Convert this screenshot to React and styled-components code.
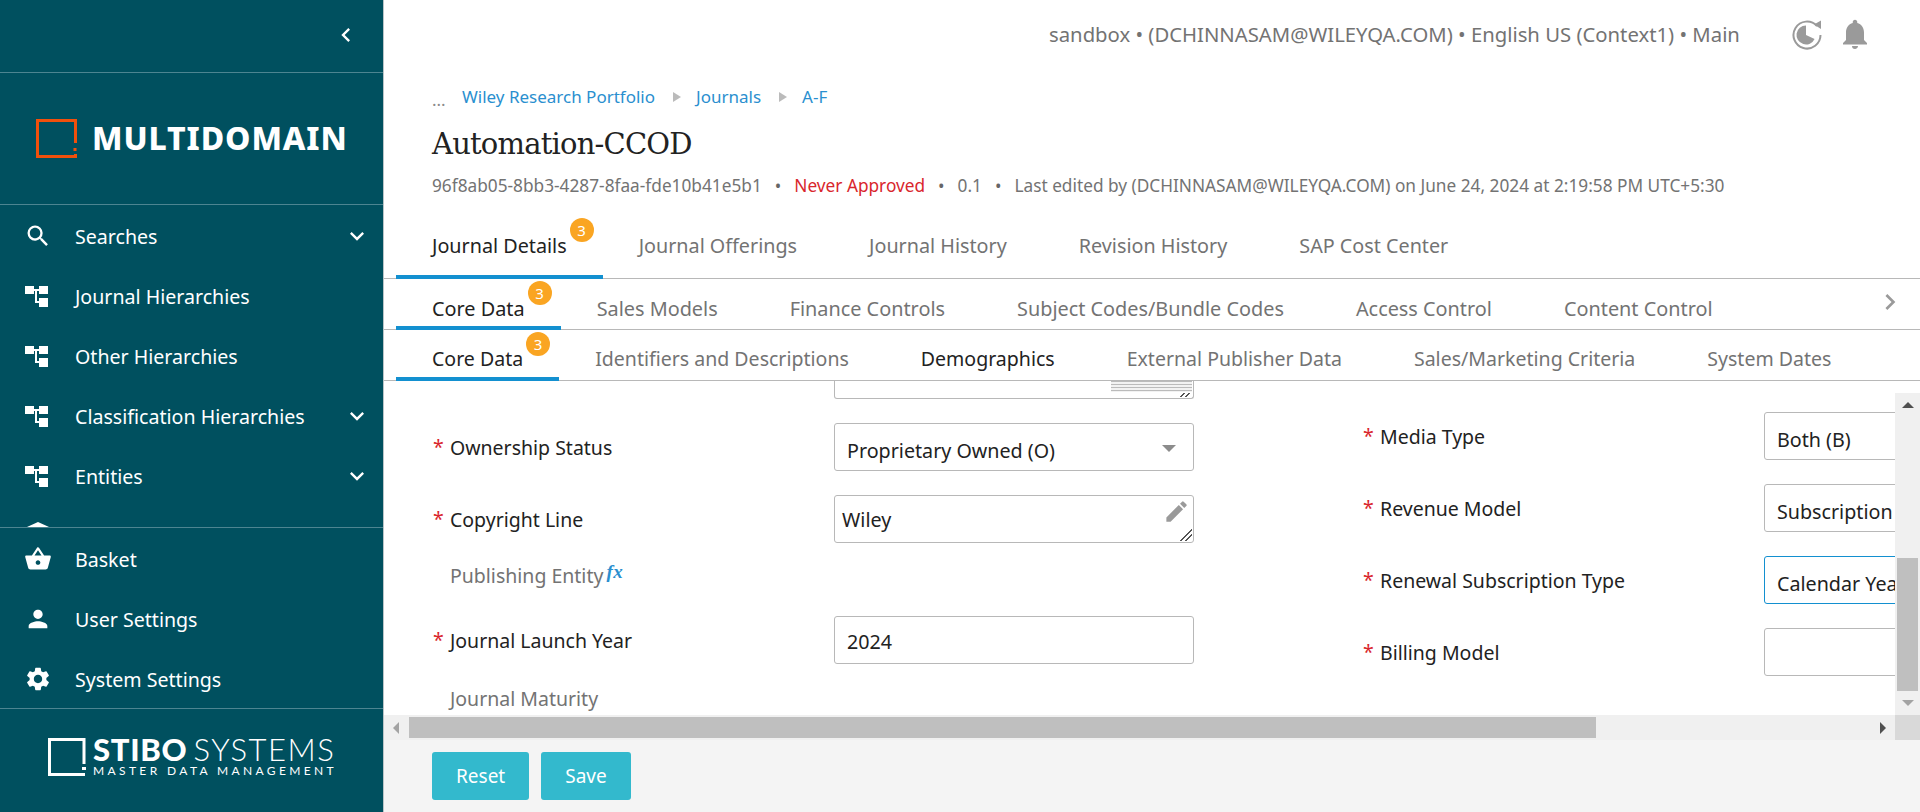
import React from 'react';
import styled, { createGlobalStyle } from 'styled-components';
import { MdSearch, MdShoppingBasket, MdPerson, MdSettings, MdEdit, MdNotifications, MdChevronLeft, MdChevronRight, MdExpandMore } from 'react-icons/md';

const GlobalStyle = createGlobalStyle`
  html, body { margin: 0; padding: 0; height: 100%; overflow: hidden; }
  body { font-family: "Noto Sans", "Open Sans", sans-serif; background: #fff; color: #222; }
  * { box-sizing: border-box; }
`;

const HierarchyIcon = () => (
  <svg width="24" height="24" viewBox="0 0 24 24" fill="#fff">
    <rect x="1" y="2" width="9" height="8" />
    <rect x="15" y="2" width="9" height="8" />
    <rect x="15" y="14" width="9" height="9" />
    <path d="M10 5h5v2h-2v10h2v2h-4V7h-1z" />
  </svg>
);

const HistoryIcon = () => (
  <svg width="31" height="32" viewBox="0 0 31 32">
    <path d="M25 8A13.5 13.5 0 1 0 28.5 17" fill="none" stroke="#9a9a9a" strokeWidth="2" />
    <path d="M14 7.5a9.5 9.5 0 1 0 8.6 13.5L14 17z" fill="#9a9a9a" />
    <path d="M22 6.5l7-4v8.5z" fill="#9a9a9a" />
  </svg>
);

const OrangeMark = () => (
  <svg width="41" height="39" viewBox="0 0 41 39" fill="none">
    <path d="M39.5 24V1.5H1.5v36H39.5V35" stroke="#f1500c" strokeWidth="3" />
    <rect x="37.5" y="29" width="3" height="3" fill="#f1500c" />
  </svg>
);

const WhiteMark = () => (
  <svg width="38" height="38" viewBox="0 0 38 38" fill="none">
    <path d="M36 26V1.5H1.5v35H37" stroke="#fff" strokeWidth="3" />
    <rect x="34" y="29" width="4" height="3" fill="#fff" />
  </svg>
);

const topMenu = [
  { label: 'Searches', icon: <MdSearch size={28} />, more: true },
  { label: 'Journal Hierarchies', icon: <HierarchyIcon /> },
  { label: 'Other Hierarchies', icon: <HierarchyIcon /> },
  { label: 'Classification Hierarchies', icon: <HierarchyIcon />, more: true },
  { label: 'Entities', icon: <HierarchyIcon />, more: true },
];

const bottomMenu = [
  { label: 'Basket', icon: <MdShoppingBasket size={28} /> },
  { label: 'User Settings', icon: <MdPerson size={28} /> },
  { label: 'System Settings', icon: <MdSettings size={28} /> },
];

const tabRows = [
  { height: 80, pad: 33, size: 19.75, tabs: ['Journal Details', 'Journal Offerings', 'Journal History', 'Revision History', 'SAP Cost Center'], badgeY: 19, badgeRight: 9 },
  { height: 51, pad: 16, size: 19.85, tabs: ['Core Data', 'Sales Models', 'Finance Controls', 'Subject Codes/Bundle Codes', 'Access Control', 'Content Control'], more: true, badgeY: 2, badgeRight: 9 },
  { height: 51, pad: 15, size: 19.55, tabs: ['Core Data', 'Identifiers and Descriptions', 'Demographics', 'External Publisher Data', 'Sales/Marketing Criteria', 'System Dates'], dark: 'Demographics', badgeY: 2, badgeRight: 9 },
];

const App = () => (
  <Page>
    <GlobalStyle />
    <Sidebar>
      <CollapseBar><MdChevronLeft size={28} /></CollapseBar>
      <Brand>
        <OrangeMark />
        <BrandName>MULTIDOMAIN</BrandName>
      </Brand>
      <TopNav>
        {topMenu.map((item) => (
          <NavItem key={item.label}>
            <NavIcon>{item.icon}</NavIcon>
            <NavLabel>{item.label}</NavLabel>
            {item.more && <NavMore><MdExpandMore size={28} /></NavMore>}
          </NavItem>
        ))}
        <NavPeek />
      </TopNav>
      <BottomNav>
        {bottomMenu.map((item) => (
          <NavItem key={item.label}>
            <NavIcon>{item.icon}</NavIcon>
            <NavLabel>{item.label}</NavLabel>
          </NavItem>
        ))}
      </BottomNav>
      <Vendor>
        <WhiteMark />
        <VendorText>
          <VendorName><b>STIBO</b><span>SYSTEMS</span></VendorName>
          <VendorSub>MASTER DATA MANAGEMENT</VendorSub>
        </VendorText>
      </Vendor>
    </Sidebar>
    <Main>
      <TopBar>
        <Session>sandbox • (DCHINNASAM@WILEYQA.COM) • English US (Context1) • Main</Session>
        <HistoryIcon />
        <BellWrap><MdNotifications size={36} /></BellWrap>
      </TopBar>
      <Breadcrumbs>
        <Ellipsis>...</Ellipsis>
        <Crumb>Wiley Research Portfolio</Crumb>
        <CrumbArrow />
        <Crumb>Journals</Crumb>
        <CrumbArrow />
        <Crumb>A-F</Crumb>
      </Breadcrumbs>
      <Title>Automation-CCOD</Title>
      <Meta>
        <span>96f8ab05-8bb3-4287-8faa-fde10b41e5b1</span>
        <Dot>•</Dot>
        <Warn>Never Approved</Warn>
        <Dot>•</Dot>
        <span>0.1</span>
        <Dot>•</Dot>
        <span>Last edited by (DCHINNASAM@WILEYQA.COM) on June 24, 2024 at 2:19:58 PM UTC+5:30</span>
      </Meta>
      {tabRows.map((row, r) => (
        <TabRow key={r} $height={row.height} $size={row.size}>
          {row.tabs.map((t, i) => (
            <Tab key={t} $active={i === 0} $dark={t === row.dark} $pad={row.pad}>
              {t}
              {i === 0 && <Badge $top={row.badgeY} $right={row.badgeRight}>3</Badge>}
            </Tab>
          ))}
          {row.more && <TabMore><MdChevronRight size={32} /></TabMore>}
        </TabRow>
      ))}
      <ScrollArea>
        <Viewport>
          <FormColumn>
            <ClippedBox><Lines /><Grip $clipped /></ClippedBox>
            <Row>
              <Label $required>Ownership Status</Label>
              <Select>Proprietary Owned (O)<Caret /></Select>
            </Row>
            <Row>
              <Label $required>Copyright Line</Label>
              <TextArea>Wiley<EditIcon><MdEdit size={27} /></EditIcon><Grip /></TextArea>
            </Row>
            <BareRow>
              <Label $muted>Publishing Entity<Fx>fx</Fx></Label>
            </BareRow>
            <Row>
              <Label $required>Journal Launch Year</Label>
              <Input>2024</Input>
            </Row>
            <BareRow>
              <Label $muted>Journal Maturity</Label>
            </BareRow>
          </FormColumn>
          <RightColumn>
            <Row><Label $required>Media Type</Label><Select>Both (B)</Select></Row>
            <Row><Label $required>Revenue Model</Label><Select>Subscription (S)</Select></Row>
            <Row><Label $required>Renewal Subscription Type</Label><Select $focus>Calendar Year</Select></Row>
            <Row><Label $required>Billing Model</Label><Select /></Row>
          </RightColumn>
        </Viewport>
        <VBar>
          <ArrowUp />
          <VTrack><VThumb /></VTrack>
          <ArrowDown />
        </VBar>
        <HBar>
          <ArrowLeft />
          <HThumb />
          <ArrowRight />
        </HBar>
        <Corner />
      </ScrollArea>
      <Footer>
        <Button>Reset</Button>
        <Button>Save</Button>
      </Footer>
    </Main>
  </Page>
);

export default App;

const Page = styled.div`
  display: flex;
  width: 1920px;
  height: 812px;
  overflow: hidden;
`;

const Sidebar = styled.aside`
  flex: 0 0 384px;
  display: flex;
  flex-direction: column;
  height: 812px;
  background: #00505f;
  border-right: 1px solid #b9c4c7;
  color: #fff;
`;

const CollapseBar = styled.div`
  height: 73px;
  flex: none;
  display: flex;
  justify-content: flex-end;
  align-items: center;
  padding: 0 23px 3px 0;
  border-bottom: 1px solid #4d8591;
`;

const Brand = styled.div`
  height: 132px;
  flex: none;
  display: flex;
  align-items: center;
  padding-left: 36px;
  gap: 15px;
  border-bottom: 1px solid #4d8591;
`;

const BrandName = styled.div`
  font-size: 32px;
  font-weight: 800;
  letter-spacing: 0.9px;
  line-height: 1;
  margin-top: -2px;
`;

const TopNav = styled.nav`
  height: 323px;
  flex: none;
  overflow: hidden;
  padding-top: 1px;
  border-bottom: 1px solid #4d8591;
`;

const BottomNav = styled.nav`
  height: 181px;
  flex: none;
  padding-top: 1px;
  border-bottom: 1px solid #4d8591;
`;

const NavItem = styled.div`
  height: 60px;
  display: flex;
  align-items: center;
  padding: 0 24px;
`;

const NavIcon = styled.div`
  width: 51px;
  display: flex;
  color: #fff;
`;

const NavLabel = styled.div`
  font-size: 19.6px;
  flex: 1;
`;

const NavMore = styled.div`
  display: flex;
  margin-right: -12px;
`;

const NavPeek = styled.div`
  width: 0;
  height: 0;
  margin: 16px 0 0 27px;
  border-left: 11px solid transparent;
  border-right: 11px solid transparent;
  border-bottom: 5px solid #fff;
`;

const Vendor = styled.div`
  flex: 1;
  display: flex;
  align-items: center;
  padding: 0 0 8px 48px;
  gap: 7px;
`;

const VendorText = styled.div`
  display: flex;
  flex-direction: column;
  gap: 5px;
`;

const VendorName = styled.div`
  display: flex;
  align-items: baseline;
  gap: 6px;
  font-family: Lato, sans-serif;
  font-size: 31px;
  line-height: 24px;
  letter-spacing: 0.7px;
  b { font-weight: 900; }
  span { font-weight: 300; letter-spacing: 1.5px; }
`;

const VendorSub = styled.div`
  font-family: Lato, sans-serif;
  font-size: 12px;
  line-height: 10px;
  letter-spacing: 3.37px;
  white-space: nowrap;
`;

const Main = styled.main`
  flex: 1;
  min-width: 0;
  display: flex;
  flex-direction: column;
`;

const TopBar = styled.header`
  height: 68px;
  flex: none;
  display: flex;
  align-items: center;
  padding-left: 665px;
  color: #737373;
`;

const Session = styled.div`
  font-size: 20.3px;
  white-space: nowrap;
  width: 691px;
  margin-right: 52px;
`;

const BellWrap = styled.div`
  display: flex;
  color: #9a9a9a;
  margin-left: 14px;
`;

const Breadcrumbs = styled.div`
  height: 40px;
  margin-top: 8px;
  flex: none;
  display: flex;
  align-items: center;
  padding-left: 48px;
  font-size: 17px;
`;

const Ellipsis = styled.span`
  color: #8a8a8a;
  width: 30px;
  padding-top: 6px;
`;

const Crumb = styled.span`
  color: #2a8fcf;
`;

const CrumbArrow = styled.span`
  width: 0;
  height: 0;
  margin: 2px 15px 0 18px;
  border-top: 5px solid transparent;
  border-bottom: 5px solid transparent;
  border-left: 8px solid #bbb;
`;

const Title = styled.h1`
  margin: 0;
  height: 55px;
  flex: none;
  padding-left: 48px;
  font-family: "DejaVu Serif", serif;
  font-weight: 400;
  font-size: 29px;
  letter-spacing: -0.8px;
  line-height: 56px;
  color: #222;
`;

const Meta = styled.div`
  height: 28px;
  flex: none;
  display: flex;
  align-items: center;
  gap: 13px;
  padding-left: 48px;
  font-size: 17.25px;
  color: #737373;
  white-space: nowrap;
`;

const Warn = styled.span`
  color: #d9262c;
`;

const Dot = styled.span`
  color: #666;
`;

const TabRow = styled.div`
  position: relative;
  height: ${(p) => p.$height}px;
  flex: none;
  display: flex;
  padding-left: 12px;
  border-bottom: 1px solid #b8b8b8;
  white-space: nowrap;
  font-size: ${(p) => p.$size}px;
`;

const Tab = styled.div`
  position: relative;
  padding: ${(p) => p.$pad}px 36px 0;
  height: calc(100% + 1px);
  color: ${(p) => (p.$active || p.$dark ? '#222' : '#737373')};
  border-bottom: 4px solid ${(p) => (p.$active ? '#1390d0' : 'transparent')};
`;

const Badge = styled.span`
  position: absolute;
  top: ${(p) => p.$top}px;
  right: ${(p) => p.$right}px;
  width: 24px;
  height: 24px;
  border-radius: 50%;
  background: #faa522;
  color: #fff;
  font-size: 15px;
  line-height: 24px;
  text-align: center;
`;

const TabMore = styled.div`
  position: absolute;
  right: 14px;
  top: 7px;
  color: #9a9a9a;
  display: flex;
`;

const ScrollArea = styled.div`
  height: 359px;
  flex: none;
  display: grid;
  grid-template-columns: 1fr 25px;
  grid-template-rows: 334px 25px;
`;

const Viewport = styled.div`
  overflow: hidden;
  display: flex;
  background: #fff;
`;

const FormColumn = styled.div`
  flex: 0 0 978px;
  padding-left: 48px;
  display: flex;
  flex-direction: column;
`;

const RightColumn = styled.div`
  flex: none;
  width: 780px;
  padding-top: 31px;
  display: flex;
  flex-direction: column;
`;

const Row = styled.div`
  display: flex;
  align-items: center;
  flex: none;
  height: 48px;
  margin-bottom: 24px;
`;

const BareRow = styled.div`
  display: flex;
  align-items: center;
  flex: none;
  height: 36px;
  margin: -10px 0 23px;
  &:last-child { margin-top: -8px; margin-bottom: 0; }
`;

const Label = styled.div`
  flex: 0 0 402px;
  padding-left: 18px;
  position: relative;
  font-size: 19.5px;
  white-space: nowrap;
  color: ${(p) => (p.$muted ? '#737373' : '#222')};
  &::before {
    content: ${(p) => (p.$required ? '"*"' : 'none')};
    position: absolute;
    left: 1px;
    top: -1px;
    color: #d9262c;
  }
`;

const Fx = styled.span`
  position: relative;
  top: -5px;
  font-family: "Liberation Serif", serif;
  font-style: italic;
  font-weight: 700;
  font-size: 19px;
  letter-spacing: 0.5px;
  color: #2a8fcf;
  margin-left: 3px;
`;

const Box = styled.div`
  flex: none;
  width: 360px;
  height: 48px;
  position: relative;
  background: #fff;
  border: 1px solid ${(p) => (p.$focus ? '#1390d0' : '#b8b8b8')};
  border-radius: 3px;
  font-size: 19.7px;
  color: #222;
  white-space: nowrap;
`;

const ClippedBox = styled(Box)`
  height: 18px;
  margin: 0 0 24px 402px;
  border-top: 0;
  border-radius: 0 0 3px 3px;
`;

const Lines = styled.div`
  position: absolute;
  top: 0;
  right: 1px;
  width: 81px;
  height: 11px;
  background: repeating-linear-gradient(#bbb 0 1px, #f2f2f2 1px 3px);
`;

const Select = styled(Box)`
  padding: 13px 12px 0;
`;

const Input = styled(Box)`
  padding: 11px 12px 0;
`;

const TextArea = styled(Box)`
  padding: 10px 7px 0;
`;

const Caret = styled.span`
  position: absolute;
  right: 17px;
  top: 21px;
  width: 0;
  height: 0;
  border-left: 7px solid transparent;
  border-right: 7px solid transparent;
  border-top: 7px solid #8c8c8c;
`;

const EditIcon = styled.span`
  position: absolute;
  right: 3px;
  top: 2px;
  display: flex;
  color: #9a9a9a;
`;

const Grip = styled.span`
  position: absolute;
  right: 1px;
  bottom: 1px;
  width: 12px;
  height: ${(p) => (p.$clipped ? 4 : 12)}px;
  background: linear-gradient(135deg, transparent 0 48%, #555 48% 55%, transparent 55% 70%, #555 70% 78%, transparent 78%);
  background-size: 12px 12px;
  background-position: bottom right;
`;

const VBar = styled.div`
  margin-top: 12px;
  background: #f0f0f0;
  display: flex;
  flex-direction: column;
  align-items: center;
  overflow: hidden;
`;

const VTrack = styled.div`
  flex: 1;
  width: 100%;
  display: flex;
  flex-direction: column;
  justify-content: flex-end;
`;

const VThumb = styled.div`
  width: 21px;
  height: 133px;
  margin-left: 2px;
  background: #bfbfbf;
`;

const ArrowUp = styled.span`
  flex: none;
  width: 0;
  height: 0;
  margin: 9px 0 7px;
  border-left: 6px solid transparent;
  border-right: 6px solid transparent;
  border-bottom: 6px solid #505050;
`;

const ArrowDown = styled.span`
  flex: none;
  width: 0;
  height: 0;
  margin: 9px 0 9px;
  border-left: 6px solid transparent;
  border-right: 6px solid transparent;
  border-top: 6px solid #a3a3a3;
`;

const HBar = styled.div`
  display: flex;
  align-items: center;
  background: #f0f0f0;
`;

const HThumb = styled.div`
  width: 1187px;
  height: 21px;
  margin-left: 10px;
  background: #bfbfbf;
`;

const ArrowLeft = styled.span`
  flex: none;
  width: 0;
  height: 0;
  margin-left: 9px;
  border-top: 6px solid transparent;
  border-bottom: 6px solid transparent;
  border-right: 6px solid #a3a3a3;
`;

const ArrowRight = styled.span`
  flex: none;
  width: 0;
  height: 0;
  margin-left: auto;
  margin-right: 9px;
  border-top: 6px solid transparent;
  border-bottom: 6px solid transparent;
  border-left: 6px solid #505050;
`;

const Corner = styled.div`
  background: #d9d9d9;
`;

const Footer = styled.div`
  height: 72px;
  flex: none;
  display: flex;
  gap: 12px;
  padding: 12px 0 0 48px;
  background: #f4f4f4;
`;

const Button = styled.div`
  height: 48px;
  padding: 0 24px;
  border-radius: 3px;
  background: #33b9cd;
  color: #fff;
  font-size: 19px;
  line-height: 48px;
`;
